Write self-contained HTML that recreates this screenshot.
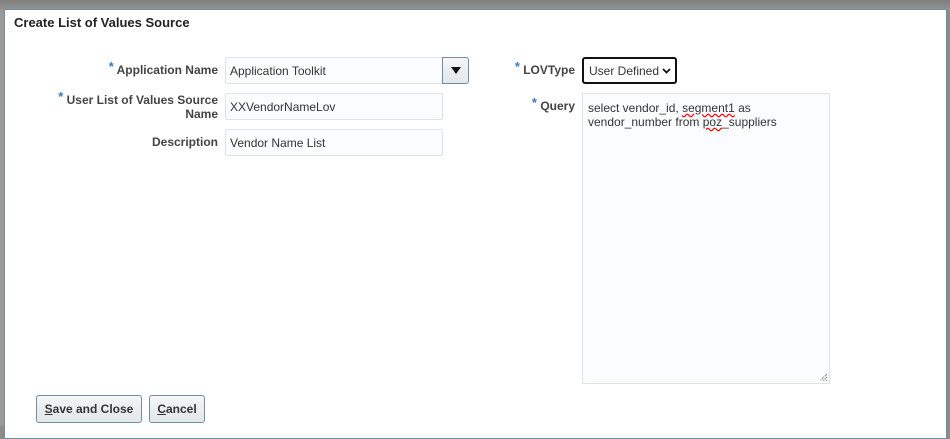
<!DOCTYPE html>
<html><head><meta charset="utf-8"><style>
*{box-sizing:border-box;margin:0;padding:0}
body{width:950px;height:426px;overflow:hidden;background:#8c8c8c;font-family:"Liberation Sans",Arial,sans-serif;position:relative;font-size:12px;color:#333}
.topbar{position:absolute;left:0;top:0;width:950px;height:10px;background:linear-gradient(#7e7e7e,#959595)}
.left{position:absolute;left:0;top:10px;width:5px;height:416px;background:#9a9a9a}
.dlg{position:absolute;left:4px;top:9px;width:943px;height:430px;background:#fff;border:1px solid #6f8fa0}
.abs{position:absolute}
.title{left:14px;top:15px;font-weight:bold;font-size:13px;color:#222}
.lbl{font-weight:bold;color:#444;text-align:right;font-size:12px;line-height:14px}
.star{color:#3a7cc0;font-size:13px;vertical-align:3px}
.inp{background:#fbfcfe;border:1px solid #dfe3e8;border-radius:2px;padding-left:4px;font-size:12px;color:#333;display:flex;align-items:center}
.btn{border:1px solid #6f8fa0;border-radius:3px;background:linear-gradient(#f4f6f8,#e3e7ea);font-weight:bold;font-size:12px;color:#333;display:flex;align-items:center;justify-content:center}
</style></head><body>
<div class="topbar"></div>
<div class="left"></div>
<div class="dlg"></div>
<div class="abs title">Create List of Values Source</div>

<div class="abs lbl" style="right:732px;top:60px"><span class="star">*</span> Application Name</div>
<div class="abs inp" style="left:225px;top:57px;width:218px;height:27px">Application Toolkit</div>
<div class="abs" style="left:442px;top:57px;width:27px;height:27px;border:1px solid #6f8fa0;border-radius:0 3px 3px 0;background:linear-gradient(#f4f6f8,#e3e7ea);display:flex;align-items:center;justify-content:center"><svg width="10" height="7"><path d="M0 0H10L5 7Z" fill="#111"/></svg></div>

<div class="abs lbl" style="right:732px;top:90px;width:200px"><span class="star">*</span> User List of Values Source<br>Name</div>
<div class="abs inp" style="left:225px;top:93px;width:218px;height:27px">XXVendorNameLov</div>

<div class="abs lbl" style="right:732px;top:135px">Description</div>
<div class="abs inp" style="left:225px;top:129px;width:218px;height:27px">Vendor Name List</div>

<div class="abs lbl" style="right:375px;top:60px"><span class="star">*</span> LOVType</div>
<div class="abs" style="left:582px;top:57px;width:95px;height:27px;border:2px solid #111;border-radius:3px;background:#fff;display:flex;align-items:center;padding-left:5px;font-size:12px;color:#333">User Defined <svg width="9" height="6" style="margin-left:3px"><path d="M1 1L4.5 4.5L8 1" stroke="#111" stroke-width="1.8" fill="none"/></svg></div>

<div class="abs lbl" style="right:375px;top:96px"><span class="star">*</span> Query</div>
<div class="abs" style="left:582px;top:93px;width:248px;height:291px;background:#fbfcfe;border:1px solid #dfe3e8;padding:7px 5px;font-size:12px;line-height:14px;color:#333">select vendor_id, <span style="text-decoration:underline wavy red">segment1</span> as vendor_number from <span style="text-decoration:underline wavy red">poz</span>_suppliers
<svg class="abs" style="right:1px;bottom:1px" width="9" height="9"><path d="M8 1L1 8M8 4L4 8M8 7L7 8" stroke="#555" stroke-width="1" stroke-dasharray="1 1"/></svg></div>

<div class="abs btn" style="left:36px;top:395px;width:106px;height:28px"><span><u>S</u>ave and Close</span></div>
<div class="abs btn" style="left:149px;top:395px;width:56px;height:28px"><span><u>C</u>ancel</span></div>
</body></html>
